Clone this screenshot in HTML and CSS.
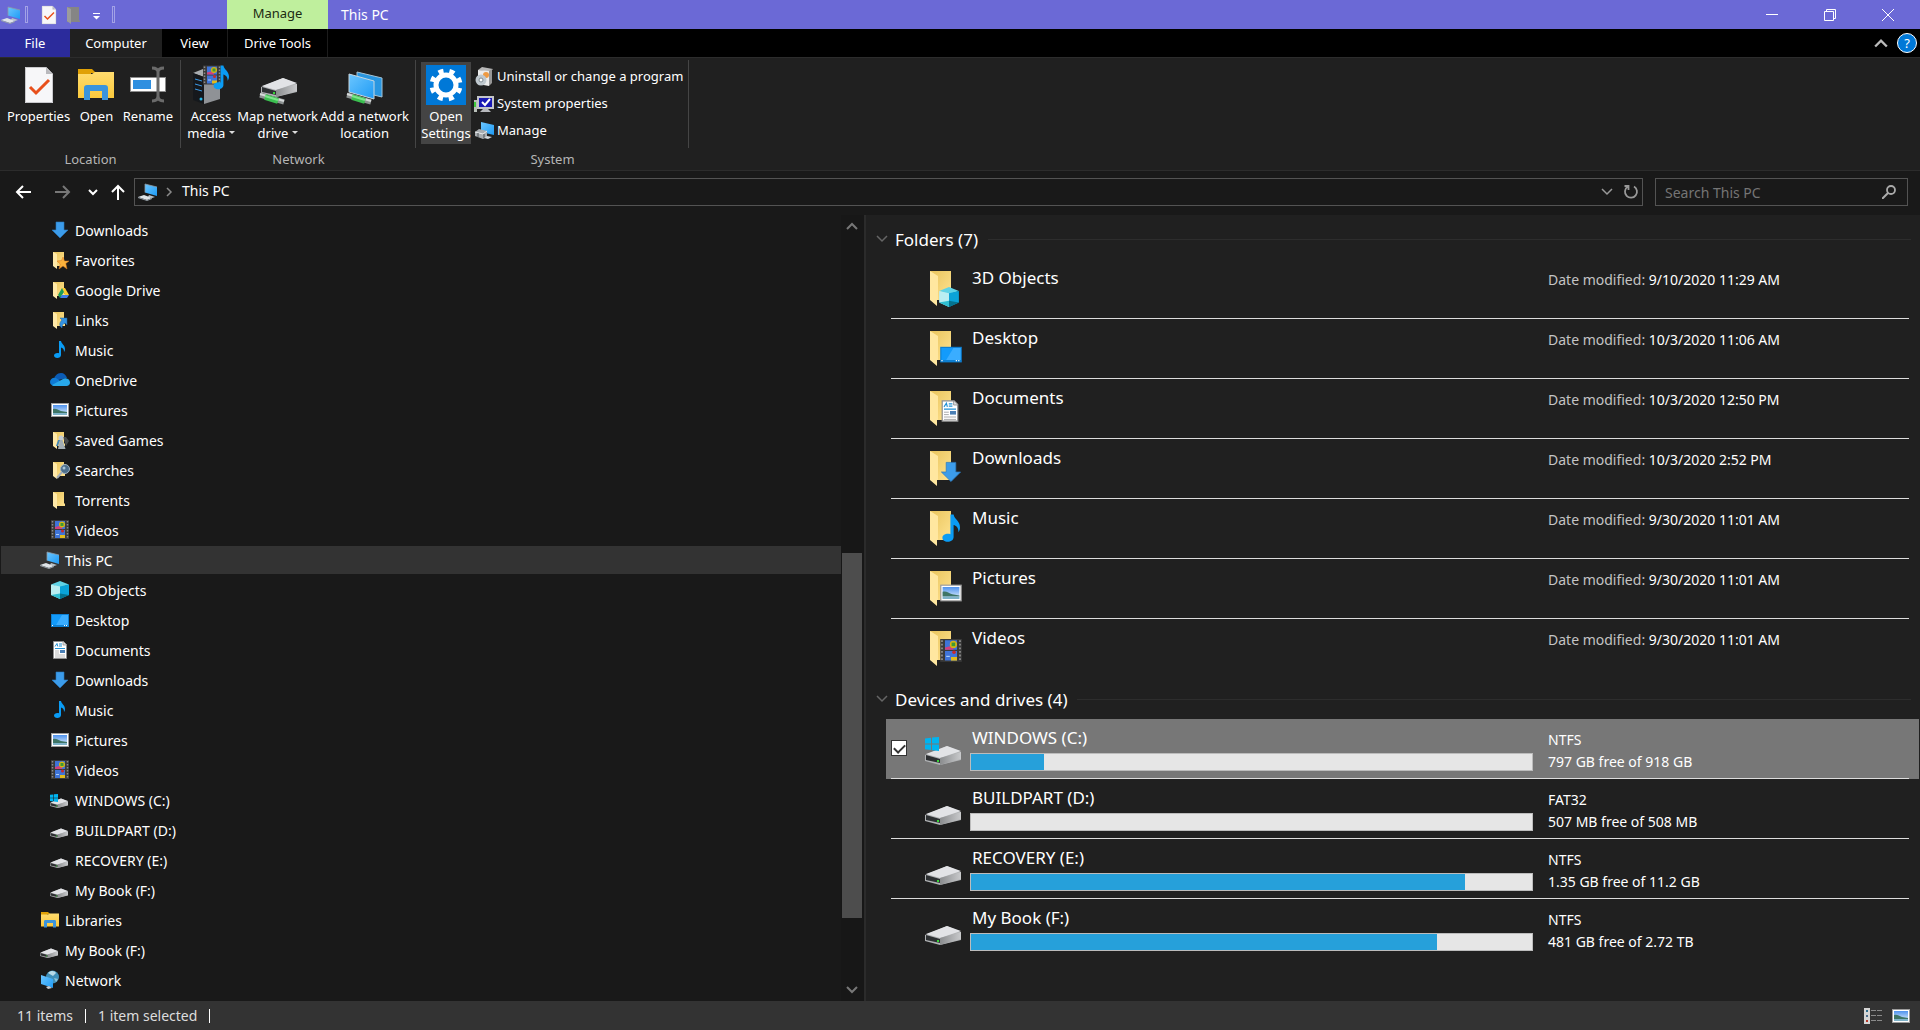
FILE: index.html
```html
<!DOCTYPE html>
<html lang="en">
<head>
    <meta charset="UTF-8">
    <meta name="viewport" content="width=device-width, initial-scale=1.0">
    <title>This PC</title>
    <link rel="stylesheet" href="styles.css">
</head>
<body>
    <!-- shared icons -->
    <svg class="sprite" aria-hidden="true">
        <defs>
            <linearGradient id="g-screen" x1="0" y1="0" x2="1" y2="1"><stop offset="0" stop-color="#6cc6ff"/><stop offset="1" stop-color="#1e9bf5"/></linearGradient>
            <linearGradient id="g-fold" x1="0" y1="0" x2="1" y2="1"><stop offset="0" stop-color="#e9c45c"/><stop offset="1" stop-color="#ffe391"/></linearGradient>
            <linearGradient id="g-sky" x1="0" y1="0" x2="0" y2="1"><stop offset="0" stop-color="#4f93ef"/><stop offset="1" stop-color="#e8f4fb"/></linearGradient>
            <linearGradient id="g-drive" x1="0" y1="0" x2="1" y2="0"><stop offset="0" stop-color="#8a8c8e"/><stop offset="1" stop-color="#c9cacc"/></linearGradient>
            <linearGradient id="g-lib" x1="0" y1="0" x2="0" y2="1"><stop offset="0" stop-color="#ffdc6e"/><stop offset="1" stop-color="#fbc93c"/></linearGradient>
        </defs>
        <symbol id="pc" viewBox="0 0 20 20">
            <path d="M7 2l12 3v9L7 10.500z" fill="url(#g-screen)"/>
            <path d="M7 10.500V2l12 3" fill="none" stroke="#8d9aa3" stroke-width=".8"/>
            <path d="M11 13l6 2-3 1-4-1z" fill="#b9c2c8"/>
            <path d="M0 15l6-2 8 3-5 2z" fill="#dfe4e8"/>
            <path d="M0 15l9 3 5-2v1l-5 2-9-3z" fill="#96a0a8"/>
        </symbol>
        <symbol id="folder" viewBox="0 0 20 20">
            <path d="M3 2h11v11l1 1v2H3z" fill="url(#g-fold)"/>
            <path d="M3 2l4 2v15l-4-3z" fill="#ffe9a8"/>
        </symbol>
        <symbol id="folder-lg" viewBox="0 0 40 40">
            <path d="M5 2h21v29H5z" fill="url(#g-fold)"/>
            <path d="M5 2l8 5v24h-1v6l-7-6z" fill="#ffe7a0"/>
        </symbol>
        <symbol id="download" viewBox="0 0 20 20">
            <path d="M6 2h8v8h4l-8 8-8-8h4z" fill="#3c9cea" stroke="#2a79bd" stroke-width=".6"/>
        </symbol>
        <symbol id="music" viewBox="0 0 20 20">
            <path d="M9 1h2c.5 3 4 4 4 8 0 1.500-.6 2.600-1 3 .2-3-1.500-4-3-4.500V15c0 2-1.800 3-3.700 3S4 17 4 15.500 5.500 13 7.500 13c.6 0 1.100.1 1.500.3z" fill="#0a9cf5"/>
        </symbol>
        <symbol id="picture" viewBox="0 0 20 20">
            <path d="M1 3h18v14H1z" fill="#9c9c9c"/><path d="M2 4h16v12H2z" fill="#fff"/>
            <path d="M3 5h14v10H3z" fill="url(#g-sky)"/>
            <path d="M3 9c3-1 5 1 8 2l6 1v1H3z" fill="#3e7566"/>
            <path d="M3 13h14v2H3z" fill="#7fb3c9"/>
        </symbol>
        <symbol id="video" viewBox="0 0 20 20">
            <path d="M1 0h18v19H1z" fill="#3a3a3a"/>
            <path d="M5 1h10v8H5zM5 10h10v8H5z" fill="#3f74d8"/>
            <path d="M5 7l4-1 3 1v2H5z" fill="#d0407c"/>
            <circle cx="12" cy="4.500" r="3" fill="#d8b413"/><path d="M10.500 3h3v3h-3z" fill="#3f9b35"/>
            <circle cx="12.500" cy="11" r="1.500" fill="#c92a2a"/><path d="M10 15h5v3h-5z" fill="#e2bb1b"/><path d="M6 14h3v1H6z" fill="#a9cdf7"/>
            <path d="M2.500 1v18M17.500 1v18" stroke="#8b8b8b" stroke-dasharray="1.500 1.500" stroke-width="1.500"/>
        </symbol>
        <symbol id="cube" viewBox="0 0 20 20">
            <path d="M10 1l9 3.500-9 3-9-3z" fill="#5fd3e6"/><path d="M1 4.500l9 2V19l-9-4z" fill="#b9eef2"/>
            <path d="M19 4.500l-9 2V19l9-4z" fill="#0aa3d8"/><path d="M10 13.500l9 1.500-9 4z" fill="#05738f"/><path d="M10 13.500L1 15l9 4z" fill="#2fbfd2"/>
        </symbol>
        <symbol id="desktop" viewBox="0 0 20 20">
            <path d="M1 4h18v13H1z" fill="#0d7fd2"/><path d="M2 5h16v10H2z" fill="#139bfb"/><path d="M12 5h6v10H6z" fill="#3aadff"/>
            <path d="M2 15.500h1M14 15.500h1M16 15.500h1" stroke="#fff"/>
        </symbol>
        <symbol id="document" viewBox="0 0 20 20">
            <path d="M3.500 1.500h10l3 3v14h-13z" fill="#fff" stroke="#8e8e8e"/><path d="M13 1.500V5h3.500" fill="#ddd" stroke="#8e8e8e" stroke-width=".7"/>
            <path d="M5 6.500l2-3 .8 3M9 4h3M9 6h3M5 8.500h10" stroke="#2291d6" fill="none"/>
            <path d="M5 11h4M5 13h4M5 15h10M5 17h10" stroke="#a7a7a7" stroke-width=".8"/><path d="M10 10h5v3h-5z" fill="#4a7fb5"/>
        </symbol>
        <symbol id="cloud" viewBox="0 0 20 20">
            <path d="M4 11c0-5 3-8 7-8 3 0 5 2 6 5z" fill="#0b5cb5"/><path d="M0 12c0-3 3-5 6-4l10 7-12 1c-2 0-4-2-4-4z" fill="#0f7bd6"/>
            <path d="M2 15l11-6c4-2 7 1 7 3.500 0 2-1.500 3.500-3.500 3.500H5c-1 0-2 0-3-1z" fill="#28a8ea"/>
        </symbol>
        <symbol id="star" viewBox="0 0 20 20"><path d="M13 7l1.500 4H19l-3.200 2.500L17 19l-4-3-4 3 1.200-5L7 11l4.500-.5z" fill="#fbb13c" stroke="#d9751e" stroke-width=".5"/></symbol>
        <symbol id="gdrive" viewBox="0 0 20 20"><path d="M12 8h3l4 7h-4z" fill="#fbcb2d"/><path d="M12 8l2 4-4 6-2-3z" fill="#1b9d58"/><path d="M10 18l2-3h7l-2 3z" fill="#3f7de8"/></symbol>
        <symbol id="link" viewBox="0 0 20 20"><path d="M10 8h7v7l-2-2c-2 1-3 2-3 5-3-2-3-5 0-8z" fill="#3592e0" stroke="#1b67aa" stroke-width=".5"/></symbol>
        <symbol id="games" viewBox="0 0 20 20"><path d="M13 7l3 0 3 4-3 5z" fill="#46494b"/><circle cx="11" cy="8" r="2.500" fill="#c4cdd3"/><path d="M10 10h2.500l3 9H8z" fill="#a3adb3"/><path d="M8 10h2l-2 6H6z" fill="#4286b8"/></symbol>
        <symbol id="lens" viewBox="0 0 20 20"><path d="M12 12l-5 6" stroke="#a6b0b8" stroke-width="2"/><circle cx="15" cy="9" r="4.500" fill="#4d6f8c" stroke="#a3b4c2"/><circle cx="14" cy="8" r="1.500" fill="#a9c5da"/></symbol>
        <symbol id="drive" viewBox="0 0 40 40">
            <path d="M0 26l22-9 14 6v8l-21 5L0 32z" fill="#b0b2b4"/>
            <path d="M1 25l21-8 14 5-21 7z" fill="#e2e3e6"/>
            <path d="M15 29l21-6v7l-21 6z" fill="url(#g-drive)"/>
            <path d="M1 26l14 4v4L1 31z" fill="#2d3032"/><path d="M12 31h2v2h-2z" fill="#35d435"/>
        </symbol>
        <symbol id="winlogo" viewBox="0 0 14 14"><path d="M0 1.500l6-.8V6.500H0zM7 .6L14 0v6.500H7zM0 7.500h6v5.600l-6-.8zM7 7.500h7V14l-7-.8z" fill="#00b4f0"/></symbol>
        <symbol id="library" viewBox="0 0 40 40">
            <path d="M2 4h14l4 4h-5v4H2z" fill="#e0a106"/><path d="M2 9h14l3-2h19v26H2z" fill="url(#g-lib)"/>
            <path d="M8 35V23c0-2 1-3 3-3h18c2 0 3 1 3 3v12h-6v-9H14v9z" fill="#3a94dc"/>
        </symbol>
        <symbol id="network" viewBox="0 0 20 20">
            <circle cx="12.500" cy="7" r="6.500" fill="#3f8fb8"/><path d="M8 3c3-3 7-2 8 0l-3 3z" fill="#b8dbe8"/><path d="M14 8l4 1-2 3z" fill="#8cc4d8"/>
            <path d="M1 5l12 4v9L1 14z" fill="url(#g-screen)"/><path d="M6 17l3-1 3 2-4 1z" fill="#c7cdd2"/>
        </symbol>
        <symbol id="check-doc" viewBox="0 0 40 40">
            <path d="M6 2h21l7 7v29H6z" fill="#f7f7f9"/><path d="M27 2v7h7z" fill="#b9b9bd"/><path d="M6.500 2.500H27l6.500 7v28h-27z" fill="none" stroke="#c9c9cd"/>
            <path d="M11 22l6 6 13-13" fill="none" stroke="#e8501c" stroke-width="3"/>
        </symbol>
        <symbol id="cable" viewBox="0 0 40 40">
            <path d="M2 28l24 7" stroke="#8d9292" stroke-width="5"/><path d="M2 27l24 7" stroke="#d5d9d9" stroke-width="2"/><path d="M7 30l13 4" stroke="#3bbf50" stroke-width="6"/><path d="M7 29l13 4" stroke="#7fe58d" stroke-width="2"/>
        </symbol>
        <symbol id="down" viewBox="0 0 12 12"><path d="M1 3l5 5 5-5" fill="none" stroke="currentColor" stroke-width="1.500"/></symbol>
        <symbol id="up" viewBox="0 0 12 12"><path d="M1 9l5-5 5 5" fill="none" stroke="currentColor" stroke-width="2"/></symbol>
    </svg>

    <div class="window">
        <header class="titlebar">
            <div class="quick">
                <svg class="icon"><use href="#pc"/></svg>
                <span class="tick"></span>
                <button class="quick-btn" aria-label="Properties"><svg class="icon"><use href="#check-doc"/></svg></button>
                <button class="quick-btn" aria-label="New folder"><svg class="icon" viewBox="0 0 20 20"><path d="M4 2h12v13l1 1v1H4z" fill="#858585"/><path d="M4 2l4 2v15l-4-3z" fill="#9c9c9c"/></svg></button>
                <button class="quick-btn" aria-label="Customize"><svg class="icon" viewBox="0 0 20 20"><path d="M6 8.500h7" stroke="#fff"/><path d="M6 11h7l-3.500 3.500z" fill="#fff"/></svg></button>
                <span class="tick"></span>
            </div>
            <span class="context-tab">Manage</span>
            <h1>This PC</h1>
            <div class="window-btns">
                <button aria-label="Minimize"><svg width="12" height="12"><path d="M0 5.500h12" stroke="#fff"/></svg></button>
                <button aria-label="Restore"><svg width="12" height="12"><path d="M.5 2.500h9v9h-9zM2.500 2.500v-2h9v9h-2" fill="none" stroke="#fff"/></svg></button>
                <button aria-label="Close"><svg width="12" height="12"><path d="M0 0l12 12M12 0L0 12" stroke="#fff"/></svg></button>
            </div>
        </header>

        <nav class="tabs">
            <button class="tab file">File</button>
            <button class="tab active">Computer</button>
            <button class="tab view">View</button>
            <button class="tab tools">Drive Tools</button>
            <div class="tabs-right">
                <button aria-label="Collapse ribbon"><svg width="14" height="14"><use href="#up"/></svg></button>
                <button class="help" aria-label="Help">?</button>
            </div>
        </nav>

        <section class="ribbon">
            <div class="group location">
                <div class="tools-row">
                    <button class="big"><svg><use href="#check-doc"/></svg><span>Properties</span></button>
                    <button class="big"><svg><use href="#library"/></svg><span>Open</span></button>
                    <button class="big"><svg viewBox="0 0 40 40"><path d="M2 12h36v15H2z" fill="#8c8c8c"/><path d="M3 13h34v13H3z" fill="#fff"/><path d="M5 15h18v9H5z" fill="#2f8fe0"/><path d="M24 3c4 0 6 1 6 4v24c0 3-2 5-6 5M36 3c-4 0-6 1-6 4v24c0 3 2 5 6 5" fill="none" stroke="#6b6b6b" stroke-width="3"/></svg><span>Rename</span></button>
                </div>
                <div class="group-name">Location</div>
            </div>
            <div class="group net">
                <div class="tools-row">
                    <button class="big"><svg viewBox="0 0 40 40"><path d="M2 8l10-4 17 3-16 5z" fill="#a9adb0"/><path d="M2 8l11 4v27L2 35z" fill="#15181c"/><path d="M13 12l16-5v27l-16 5z" fill="#8f9296"/><path d="M4 14l7 2M4 19l7 2M4 24l7 2" stroke="#3c9be8"/><circle cx="10" cy="34" r="1.500" fill="#27b6e8"/><use href="#video" x="11" y="0" width="20" height="21"/><use href="#music" x="17" y="-1" width="28" height="28"/></svg><span>Access<br>media <i class="caret"></i></span></button>
                    <button class="big"><svg viewBox="0 0 40 40"><use href="#drive" x="3" y="-4"/><use href="#cable" y="2"/></svg><span>Map network<br>drive <i class="caret"></i></span></button>
                    <button class="big"><svg viewBox="0 0 40 40"><path d="M12 7l25 6v19l-25-6z" fill="#2996e0" stroke="#a3c3d6"/><path d="M4 9l25 7v18L4 27z" fill="url(#g-screen)" stroke="#c7d6df"/><use href="#cable" y="2"/></svg><span>Add a network<br>location</span></button>
                </div>
                <div class="group-name">Network</div>
            </div>
            <div class="group system">
                <div class="tools-row">
                    <button class="big settings"><svg viewBox="0 0 40 40"><path d="M0 0h40v40H0z" fill="#0078d7"/><circle cx="20" cy="20" r="10" fill="none" stroke="#fff" stroke-width="5"/><circle cx="20" cy="20" r="14" fill="none" stroke="#fff" stroke-width="5" stroke-dasharray="5 6" stroke-dashoffset="-3"/></svg><span>Open<br>Settings</span></button>
                    <div class="small-list">
                        <button class="small"><svg viewBox="0 0 20 20"><path d="M4 3l4-3 11 2-3 3z" fill="#b7b7b7"/><path d="M4 3l11 1v15L4 17z" fill="#ececec"/><path d="M15 4l3-2v14l-3 3z" fill="#979797"/><circle cx="12" cy="8" r="3" fill="#ee9a43"/><circle cx="7" cy="13" r="5.500" fill="#bfc8ce"/><circle cx="7" cy="13" r="2" fill="#fff" stroke="#7e8a92"/></svg>Uninstall or change a program</button>
                        <button class="small"><svg viewBox="0 0 20 20"><path d="M0 6h3v12H0z" fill="#b9bfb9"/><path d="M0 8h2v5H0z" fill="#3ec93e"/><path d="M3 2h17v13H3z" fill="#c3c5ca"/><path d="M5 4h13v9H5z" fill="#1919b5"/><path d="M9 15h5l3 3H6z" fill="#b6b8bc"/><path d="M8 8l3 3 5-6" fill="none" stroke="#fff" stroke-width="2"/></svg>System properties</button>
                        <button class="small"><svg viewBox="0 0 20 20"><path d="M7 1l13 3v10L7 11z" fill="url(#g-screen)"/><path d="M1 11l4-3 8 2v6l-4 2-8-3z" fill="#a9adb0"/><path d="M1 11l8 2 4-3" stroke="#e8eaec" fill="none"/><path d="M4 12v4M10 13v4" stroke="#4d5154"/><path d="M13 15l5 1-4 2-4-1z" fill="#d5dade"/></svg>Manage</button>
                    </div>
                </div>
                <div class="group-name">System</div>
            </div>
        </section>

        <section class="address-row">
            <div class="history">
                <button aria-label="Back"><svg width="16" height="16"><path d="M16 8H2M8 2L2 8l6 6" fill="none" stroke="#fff" stroke-width="2"/></svg></button>
                <button aria-label="Forward"><svg width="16" height="16"><path d="M0 8h14M8 2l6 6-6 6" fill="none" stroke="#777" stroke-width="2"/></svg></button>
                <button class="recent" aria-label="Recent locations"><svg width="10" height="10" viewBox="0 0 10 10"><path d="M1 3l4 4 4-4" fill="none" stroke="#fff" stroke-width="2"/></svg></button>
                <button class="parent" aria-label="Up"><svg width="14" height="16"><path d="M7 16V2M1 8l6-6 6 6" fill="none" stroke="#fff" stroke-width="2"/></svg></button>
            </div>
            <div class="address">
                <svg class="icon"><use href="#pc"/></svg>
                <svg class="crumb-sep" width="8" height="10"><path d="M2 1l4 4-4 4" fill="none" stroke="#8a8a8a" stroke-width="1.500"/></svg>
                <a href="#">This PC</a>
                <button class="drop" aria-label="Previous locations"><svg width="12" height="12"><use href="#down"/></svg></button>
                <button aria-label="Refresh"><svg width="16" height="16" viewBox="0 0 16 16"><path d="M11 2.500a6 6 0 1 1-6.500.3M1.500 2H5.500v4" fill="none" stroke="#999" stroke-width="1.800"/></svg></button>
            </div>
            <form class="search">
                <input type="text" id="search" placeholder="Search This PC" aria-label="Search This PC">
                <button aria-label="Search"><svg width="14" height="14"><circle cx="9" cy="5" r="4" fill="none" stroke="#aaa" stroke-width="1.800"/><path d="M6 8l-6 6" stroke="#aaa" stroke-width="2"/></svg></button>
            </form>
        </section>

        <div class="content">
            <aside class="sidebar">
                <ul class="tree">
                    <li><a href="#" class="child"><svg class="icon"><use href="#download"/></svg>Downloads</a></li>
                    <li><a href="#" class="child"><svg class="icon"><use href="#folder"/><use href="#star"/></svg>Favorites</a></li>
                    <li><a href="#" class="child"><svg class="icon"><use href="#folder"/><use href="#gdrive"/></svg>Google Drive</a></li>
                    <li><a href="#" class="child"><svg class="icon"><use href="#folder"/><use href="#link"/></svg>Links</a></li>
                    <li><a href="#" class="child"><svg class="icon"><use href="#music"/></svg>Music</a></li>
                    <li><a href="#" class="child"><svg class="icon"><use href="#cloud"/></svg>OneDrive</a></li>
                    <li><a href="#" class="child"><svg class="icon"><use href="#picture"/></svg>Pictures</a></li>
                    <li><a href="#" class="child"><svg class="icon"><use href="#folder"/><use href="#games"/></svg>Saved Games</a></li>
                    <li><a href="#" class="child"><svg class="icon"><use href="#folder"/><use href="#lens"/></svg>Searches</a></li>
                    <li><a href="#" class="child"><svg class="icon"><use href="#folder"/></svg>Torrents</a></li>
                    <li><a href="#" class="child"><svg class="icon"><use href="#video"/></svg>Videos</a></li>
                    <li><a href="#" class="current"><svg class="icon"><use href="#pc"/></svg>This PC</a></li>
                    <li><a href="#" class="child"><svg class="icon"><use href="#cube"/></svg>3D Objects</a></li>
                    <li><a href="#" class="child"><svg class="icon"><use href="#desktop"/></svg>Desktop</a></li>
                    <li><a href="#" class="child"><svg class="icon"><use href="#document"/></svg>Documents</a></li>
                    <li><a href="#" class="child"><svg class="icon"><use href="#download"/></svg>Downloads</a></li>
                    <li><a href="#" class="child"><svg class="icon"><use href="#music"/></svg>Music</a></li>
                    <li><a href="#" class="child"><svg class="icon"><use href="#picture"/></svg>Pictures</a></li>
                    <li><a href="#" class="child"><svg class="icon"><use href="#video"/></svg>Videos</a></li>
                    <li><a href="#" class="child"><svg class="icon"><use href="#drive"/><use href="#winlogo" x="0" y="4" width="8" height="8"/></svg>WINDOWS (C:)</a></li>
                    <li><a href="#" class="child"><svg class="icon"><use href="#drive"/></svg>BUILDPART (D:)</a></li>
                    <li><a href="#" class="child"><svg class="icon"><use href="#drive"/></svg>RECOVERY (E:)</a></li>
                    <li><a href="#" class="child"><svg class="icon"><use href="#drive"/></svg>My Book (F:)</a></li>
                    <li><a href="#"><svg class="icon"><use href="#library"/></svg>Libraries</a></li>
                    <li><a href="#"><svg class="icon"><use href="#drive"/></svg>My Book (F:)</a></li>
                    <li><a href="#"><svg class="icon"><use href="#network"/></svg>Network</a></li>
                </ul>
                <div class="scrollbar">
                    <svg width="12" height="12"><use href="#up"/></svg>
                    <div class="track"><div class="thumb"></div></div>
                    <svg class="flip" width="12" height="12"><use href="#up"/></svg>
                </div>
            </aside>

            <main class="files">
                <h2><svg width="12" height="12"><use href="#down"/></svg>Folders (7)</h2>
                <ul class="items">
                    <li class="item">
                        <svg class="thumbnail"><use href="#folder-lg"/><use href="#cube" x="13" y="17" width="22" height="22"/></svg>
                        <div class="name">3D Objects</div>
                        <div class="info"><span>Date modified:</span> 9/10/2020 11:29 AM</div>
                    </li>
                    <li class="item">
                        <svg class="thumbnail"><use href="#folder-lg"/><use href="#desktop" x="14" y="13" width="24" height="24"/></svg>
                        <div class="name">Desktop</div>
                        <div class="info"><span>Date modified:</span> 10/3/2020 11:06 AM</div>
                    </li>
                    <li class="item">
                        <svg class="thumbnail"><use href="#folder-lg"/><use href="#document" x="13" y="10" width="24" height="24"/></svg>
                        <div class="name">Documents</div>
                        <div class="info"><span>Date modified:</span> 10/3/2020 12:50 PM</div>
                    </li>
                    <li class="item">
                        <svg class="thumbnail"><use href="#folder-lg"/><use href="#download" x="14" y="11" width="24" height="24"/></svg>
                        <div class="name">Downloads</div>
                        <div class="info"><span>Date modified:</span> 10/3/2020 2:52 PM</div>
                    </li>
                    <li class="item">
                        <svg class="thumbnail"><use href="#folder-lg"/><use href="#music" x="11" y="4" width="32" height="32"/></svg>
                        <div class="name">Music</div>
                        <div class="info"><span>Date modified:</span> 9/30/2020 11:01 AM</div>
                    </li>
                    <li class="item">
                        <svg class="thumbnail"><use href="#folder-lg"/><use href="#picture" x="14" y="12" width="24" height="24"/></svg>
                        <div class="name">Pictures</div>
                        <div class="info"><span>Date modified:</span> 9/30/2020 11:01 AM</div>
                    </li>
                    <li class="item">
                        <svg class="thumbnail"><use href="#folder-lg"/><use href="#video" x="14" y="10" width="24" height="24"/></svg>
                        <div class="name">Videos</div>
                        <div class="info"><span>Date modified:</span> 9/30/2020 11:01 AM</div>
                    </li>
                </ul>

                <h2><svg width="12" height="12"><use href="#down"/></svg>Devices and drives (4)</h2>
                <ul class="items">
                    <li class="item selected">
                        <input type="checkbox" class="pick" aria-label="Select WINDOWS (C:)" checked>
                        <svg class="thumbnail"><use href="#drive"/><use href="#winlogo" x="0" y="8" width="14" height="14"/></svg>
                        <div class="name">WINDOWS (C:)<div class="bar"><div class="used" style="width: 13%"></div></div></div>
                        <div class="info">NTFS<br>797 GB free of 918 GB</div>
                    </li>
                    <li class="item">
                        <svg class="thumbnail"><use href="#drive"/></svg>
                        <div class="name">BUILDPART (D:)<div class="bar"><div class="used" style="width: 0%"></div></div></div>
                        <div class="info">FAT32<br>507 MB free of 508 MB</div>
                    </li>
                    <li class="item">
                        <svg class="thumbnail"><use href="#drive"/></svg>
                        <div class="name">RECOVERY (E:)<div class="bar"><div class="used" style="width: 88%"></div></div></div>
                        <div class="info">NTFS<br>1.35 GB free of 11.2 GB</div>
                    </li>
                    <li class="item">
                        <svg class="thumbnail"><use href="#drive"/></svg>
                        <div class="name">My Book (F:)<div class="bar"><div class="used" style="width: 83%"></div></div></div>
                        <div class="info">NTFS<br>481 GB free of 2.72 TB</div>
                    </li>
                </ul>
            </main>
        </div>

        <footer class="status">
            <span>11 items</span>
            <span>1 item selected</span>
            <div class="views">
                <button aria-label="Details view"><svg class="icon" viewBox="0 0 20 20"><path d="M1 2h6v16H1z" fill="#d5d5d5"/><path d="M3 4h2v2H3z" fill="#2f6d8c"/><path d="M3 9h2v2H3z" fill="#4b6d8c"/><path d="M3 14h2v2H3z" fill="#b5382a"/><path d="M8 4.500h5M14 4.500h5M8 9.500h5M14 9.500h5M8 14.500h5M14 14.500h5" stroke="#8a8a8a"/></svg></button>
                <button aria-label="Large icons view"><svg class="icon"><use href="#picture"/></svg></button>
            </div>
        </footer>
    </div>
</body>
</html>
```

FILE: styles.css
```css
* {
    box-sizing: border-box;
}

body {
    margin: 0;
    background-color: #191919;
    color: #fff;
    font-family: "Noto Sans", "Open Sans", sans-serif;
    font-size: 14px;
}

button {
    background: none;
    border: none;
    padding: 0;
    color: inherit;
    font: inherit;
}

a {
    color: inherit;
    text-decoration: none;
}

ul {
    list-style: none;
    margin: 0;
    padding: 0;
}

svg {
    display: block;
    flex: none;
}

.sprite {
    position: absolute;
    width: 0;
    height: 0;
}

.icon {
    width: 20px;
    height: 20px;
}

.window {
    display: flex;
    flex-direction: column;
    min-height: 100vh;
}

/* title bar */
.titlebar {
    display: flex;
    height: 29px;
    background-color: #6b69d6;
}

.quick {
    display: flex;
    align-items: center;
    width: 227px;
    padding-left: 1px;
}

.tick {
    width: 3px;
    height: 17px;
    margin-left: 4px;
    border: 1px solid #a3a2e6;
}

.quick-btn {
    margin-left: 4px;
}

.tick + .quick-btn {
    margin-left: 11px;
}

.quick-btn + .tick {
    margin-left: 5px;
}

.context-tab {
    width: 101px;
    background-color: #bfef9d;
    color: #1c2b12;
    font-size: 13px;
    line-height: 27px;
    text-align: center;
}

h1 {
    margin: 0 0 0 13px;
    font-size: 14px;
    font-weight: normal;
    line-height: 29px;
}

.window-btns {
    display: flex;
    margin-left: auto;
    padding-right: 3px;
}

.window-btns button {
    display: flex;
    justify-content: center;
    align-items: center;
    width: 58px;
}

/* ribbon tabs */
.tabs {
    display: flex;
    height: 28px;
    background-color: #000;
    font-size: 13px;
}

.file {
    width: 70px;
    background-color: #2b2b9c;
}

.active {
    width: 92px;
    background-color: #202020;
}

.view {
    width: 65px;
}

.tools {
    width: 101px;
    border: solid #1c1c1c;
    border-width: 0 1px;
}

.tabs-right {
    display: flex;
    align-items: center;
    gap: 9px;
    margin-left: auto;
    padding-right: 3px;
    color: #bbb;
}

.help {
    width: 20px;
    height: 20px;
    border: 1px solid #fff;
    border-radius: 50%;
    background-color: #0078d7;
    color: #fff;
    line-height: 18px;
}

/* ribbon */
.ribbon {
    display: flex;
    height: 114px;
    border: solid #2c2c2c;
    border-width: 1px 0;
    background-color: #202020;
    font-size: 13px;
    line-height: 17px;
}

.group {
    display: flex;
    flex-direction: column;
    padding-top: 2px;
}

.location {
    width: 181px;
}

.net {
    width: 235px;
}

.system {
    width: 273px;
}

.tools-row {
    display: flex;
    justify-content: space-between;
    height: 89px;
    padding: 2px 5px 0;
    border-right: 1px solid #454545;
}

.location .tools-row {
    padding: 2px 6px 0;
}

.system .tools-row {
    justify-content: flex-start;
}

.group-name {
    color: #b5b5b5;
    text-align: center;
    line-height: 22px;
}

.big {
    display: flex;
    flex-direction: column;
    align-items: center;
    gap: 3px;
    min-width: 50px;
    height: 82px;
    padding: 3px 1px 0;
    white-space: nowrap;
}

.big svg {
    width: 40px;
    height: 40px;
}

.caret {
    display: inline-block;
    border: 3px solid transparent;
    border-top-color: #ddd;
    border-bottom: none;
    vertical-align: 4px;
}

.settings {
    background-color: #444;
}

.small-list {
    padding: 1px 0 0 3px;
}

.small {
    display: flex;
    align-items: center;
    gap: 3px;
    height: 27px;
    white-space: nowrap;
}

.small svg {
    width: 20px;
    height: 20px;
}

/* address bar */
.address-row {
    display: flex;
    height: 44px;
    padding: 7px 12px 9px 15px;
}

.history {
    display: flex;
    align-items: center;
    width: 119px;
    gap: 24px;
}

.recent {
    margin-left: -7px;
}

.parent {
    margin-left: -11px;
}

.address {
    display: flex;
    flex: 1;
    align-items: center;
    padding: 0 3px;
    border: 1px solid #535353;
    line-height: 24px;
}

.address a {
    padding-bottom: 2px;
}

.crumb-sep {
    margin: 0 9px 0 7px;
}

.drop {
    margin: 0 10px 0 auto;
    color: #999;
}

.search {
    display: flex;
    align-items: center;
    width: 253px;
    margin-left: 12px;
    padding-right: 11px;
    border: 1px solid #535353;
}

.search input {
    flex: 1;
    min-width: 0;
    padding: 0 9px;
    border: none;
    outline: none;
    background: none;
    color: #fff;
    font: inherit;
}

.search input::placeholder {
    color: #757575;
}

/* folder tree */
.content {
    display: flex;
    flex: 1;
}

.sidebar {
    display: flex;
    width: 45%;
}

.tree {
    flex: 1;
    padding: 0 0 6px 1px;
}

.tree a {
    display: flex;
    align-items: center;
    gap: 5px;
    height: 28px;
    margin: 1px 0;
    padding-left: 39px;
}

.tree li {
    display: flow-root;
    height: 30px;
}

.tree .child {
    padding-left: 49px;
}

.tree .current {
    background-color: #333;
}

.scrollbar {
    display: flex;
    flex-direction: column;
    align-items: center;
    width: 23px;
    padding: 5px 2px 5px 1px;
    background-color: #171717;
    color: #777;
}

.flip {
    transform: rotate(180deg);
}

.track {
    flex: 1;
    width: 100%;
    padding-top: 321px;
}

.thumb {
    height: 365px;
    background-color: #4d4d4d;
}

/* file list */
.files {
    flex: 1;
    border-left: 2px solid #2b2b2b;
    background-color: #202020;
}

h2 {
    display: flex;
    align-items: center;
    gap: 7px;
    margin: 0;
    padding: 4px 9px 0 10px;
    height: 44px;
    font-size: 17px;
    font-weight: normal;
}

h2 svg {
    color: #666;
}

h2::after {
    content: "";
    flex: 1;
    height: 1px;
    margin-left: 3px;
    background-color: #2d2d2d;
}

.items + h2 {
    height: 40px;
    padding-top: 0;
}

.item {
    display: grid;
    grid-template-columns: 39px 40px minmax(0, 1fr) 361px;
    height: 60px;
    margin: 0 11px 0 25px;
    border-bottom: 1px solid #ddd;
}

.item:last-child {
    border-bottom-color: transparent;
}

.pick {
    grid-area: 1 / 1;
    appearance: none;
    width: 16px;
    height: 16px;
    margin: 21px 0 0;
    border: 1px solid #333;
    background-color: #fff;
}

.pick:checked::after {
    content: "";
    display: block;
    width: 9px;
    height: 5px;
    margin: 3px 0 0 2px;
    border: solid #333;
    border-width: 0 0 2px 2px;
    transform: rotate(-45deg);
}

.thumbnail {
    grid-area: 1 / 2;
    width: 40px;
    height: 40px;
    margin: 10px 0 0 -5px;
}

.name {
    grid-area: 1 / 3;
    padding: 8px 15px 0 2px;
    font-size: 17px;
    line-height: 22px;
}

.info {
    grid-area: 1 / 4;
    padding-top: 10px;
    line-height: 22px;
}

.info span {
    color: #c4c4c4;
}

.selected {
    background-color: #777;
    box-shadow: -5px 0 #777, 10px 0 #777;
}

.bar {
    height: 18px;
    margin: 4px 0 0 -2px;
    border: 1px solid #bcbcbc;
    background-color: #e6e6e6;
}

.used {
    height: 100%;
    background-color: #26a0da;
}

/* status bar */
.status {
    display: flex;
    align-items: center;
    height: 29px;
    padding: 0 9px 0 17px;
    background-color: #333;
    color: #ddd;
}

.status span {
    padding-right: 12px;
    margin-right: 12px;
    line-height: 14px;
    border-right: 1px solid #fff;
}

.views {
    display: flex;
    gap: 8px;
    margin-left: auto;
}
```
